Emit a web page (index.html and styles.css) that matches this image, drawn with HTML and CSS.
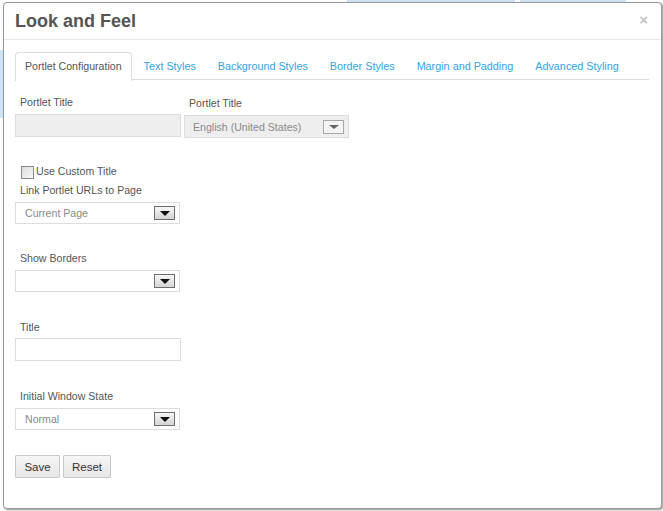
FILE: index.html
```html
<!DOCTYPE html>
<html>
<head>
<meta charset="utf-8">
<link rel="stylesheet" href="styles.css">
</head>
<body>
<div class="backdrop">
  <span class="bg-strip bg-a"></span>
  <span class="bg-strip bg-b"></span>
  <span class="bg-strip bg-c"></span>
</div>
<div class="dialog">
  <div class="dialog-header">
    <h3 class="dialog-title">Look and Feel</h3>
    <span class="close">×</span>
  </div>
  <div class="dialog-body">
    <ul class="tabs">
      <li class="tab active">Portlet Configuration</li>
      <li class="tab">Text Styles</li>
      <li class="tab">Background Styles</li>
      <li class="tab">Border Styles</li>
      <li class="tab">Margin and Padding</li>
      <li class="tab">Advanced Styling</li>
    </ul>

    <div class="form">
      <div class="row-two">
        <div class="field">
          <label class="label">Portlet Title</label>
          <div class="input disabled"></div>
        </div>
        <div class="field field-second">
          <label class="label">Portlet Title</label>
          <div class="select disabled wide">
            <span class="select-value">English (United States)</span>
            <span class="arrow-btn"><span class="tri"></span></span>
          </div>
        </div>
      </div>

      <div class="check-row">
        <span class="checkbox"></span>
        <span class="check-label">Use Custom Title</span>
      </div>

      <div class="field g-link">
        <label class="label">Link Portlet URLs to Page</label>
        <div class="select">
          <span class="select-value">Current Page</span>
          <span class="arrow-btn"><span class="tri"></span></span>
        </div>
      </div>

      <div class="field g-borders">
        <label class="label">Show Borders</label>
        <div class="select">
          <span class="select-value"></span>
          <span class="arrow-btn"><span class="tri"></span></span>
        </div>
      </div>

      <div class="field g-title">
        <label class="label">Title</label>
        <div class="input text"></div>
      </div>

      <div class="field g-state">
        <label class="label">Initial Window State</label>
        <div class="select">
          <span class="select-value">Normal</span>
          <span class="arrow-btn"><span class="tri"></span></span>
        </div>
      </div>

      <div class="buttons">
        <button class="btn btn-save">Save</button>
        <button class="btn btn-reset">Reset</button>
      </div>
    </div>
  </div>
</div>
</body>
</html>
```

FILE: styles.css
```css
html, body {
  margin: 0;
  padding: 0;
  background: #ffffff;
  width: 663px;
  height: 511px;
  overflow: hidden;
  font-family: "Liberation Sans", Arial, sans-serif;
}

.backdrop {
  position: absolute;
  left: 0;
  top: 0;
  width: 663px;
  height: 511px;
}

.bg-strip {
  position: absolute;
  background: #cfe4f5;
}
.bg-a { left: 347px; top: 0; width: 168px; height: 6px; }
.bg-b { left: 520px; top: 0; width: 106px; height: 6px; }
.bg-c { left: 0; top: 50px; width: 6px; height: 68px; }

.dialog {
  position: absolute;
  left: 3px;
  top: 2px;
  width: 657px;
  height: 505px;
  background: #fff;
  border: 1px solid #9a9a9a;
  border-radius: 4px;
  box-shadow: 1px 1px 2px rgba(0,0,0,0.45);
  display: flex;
  flex-direction: column;
}

.dialog-header {
  height: 36px;
  border-bottom: 1px solid #e8e8e8;
  display: flex;
  align-items: center;
  justify-content: space-between;
  padding: 0 13px 0 11px;
}

.dialog-title {
  margin: 0;
  font-size: 18px;
  font-weight: bold;
  color: #555;
  line-height: 36px;
}

.close {
  color: #c2c2c2;
  font-size: 15px;
  font-weight: bold;
  line-height: 1;
  margin-top: -3px;
}

.dialog-body {
  padding: 12px 12px 0 11px;
}

.tabs {
  list-style: none;
  margin: 0;
  padding: 0;
  display: flex;
  border-bottom: 1px solid #dddddd;
  height: 27px;
}

.tab {
  font-size: 10.8px;
  color: #2fa4e7;
  padding: 0 9px;
  line-height: 27px;
  border: 1px solid transparent;
  border-bottom: none;
  margin-right: 2px;
  white-space: nowrap;
}

.tab.active {
  color: #555;
  border-color: #dddddd;
  border-radius: 4px 4px 0 0;
  background: #fff;
  height: 28px;
  padding: 0 9px 0 9px;
  font-size: 10.6px;
}

.form {
  padding-top: 15px;
}

.row-two {
  display: flex;
  gap: 3px;
}

.field {
  display: flex;
  flex-direction: column;
}

.field-second {
  padding-top: 1px;
}

.label {
  font-size: 10.6px;
  color: #555;
  line-height: 14px;
  padding-left: 5px;
  margin-bottom: 5px;
}

.input {
  width: 164px;
  height: 21px;
  border: 1px solid #dddddd;
  background: #fff;
}

.input.disabled {
  background: #eeeeee;
  height: 21px;
}

.select {
  height: 20px;
  border: 1px solid #dddddd;
  background: #fff;
  display: flex;
  align-items: center;
  justify-content: space-between;
  padding-left: 9px;
  width: 154px;
}

.select.disabled {
  background: #eeeeee;
  height: 21px;
  width: 155px;
  padding-left: 8px;
}

.select-value {
  font-size: 10.6px;
  color: #8a8a8a;
}

.arrow-btn {
  width: 19px;
  height: 12px;
  border: 1px solid #6e6e6e;
  background: linear-gradient(#f7f7f7, #d4d4d4);
  margin-right: 4px;
  display: flex;
  align-items: center;
  justify-content: center;
}

.select.disabled .arrow-btn {
  border-color: #a8a8a8;
  background: #f4f4f4;
}

.tri {
  width: 0;
  height: 0;
  border-left: 5px solid transparent;
  border-right: 5px solid transparent;
  border-top: 5px solid #111;
}

.select.disabled .tri {
  border-top-color: #666;
  border-top-width: 4px;
}

.check-row {
  display: flex;
  align-items: center;
  margin-top: 27px;
  height: 14px;
  padding-left: 6px;
}

.checkbox {
  width: 11px;
  height: 11px;
  border: 1px solid #8a8a8a;
  background: linear-gradient(135deg, #dcdcdc, #f8f8f8);
  margin-right: 2px;
  margin-top: 1px;
}

.check-label {
  font-size: 10.6px;
  color: #555;
  line-height: 14px;
  margin-top: -2px;
}

.g-link { margin-top: 4px; }
.g-borders { margin-top: 27px; }
.g-title { margin-top: 28px; }
.g-title .label { margin-bottom: 4px; }
.g-state { margin-top: 28px; }

.buttons {
  display: flex;
  gap: 3px;
  margin-top: 25px;
}

.btn {
  font-family: "Liberation Sans", Arial, sans-serif;
  font-size: 11.5px;
  color: #333;
  height: 23px;
  border: 1px solid #c8c8c8;
  border-radius: 1px;
  background: linear-gradient(#f6f6f6, #e6e6e6);
  padding: 0;
}

.btn-save { width: 45px; }
.btn-reset { width: 48px; }
```
